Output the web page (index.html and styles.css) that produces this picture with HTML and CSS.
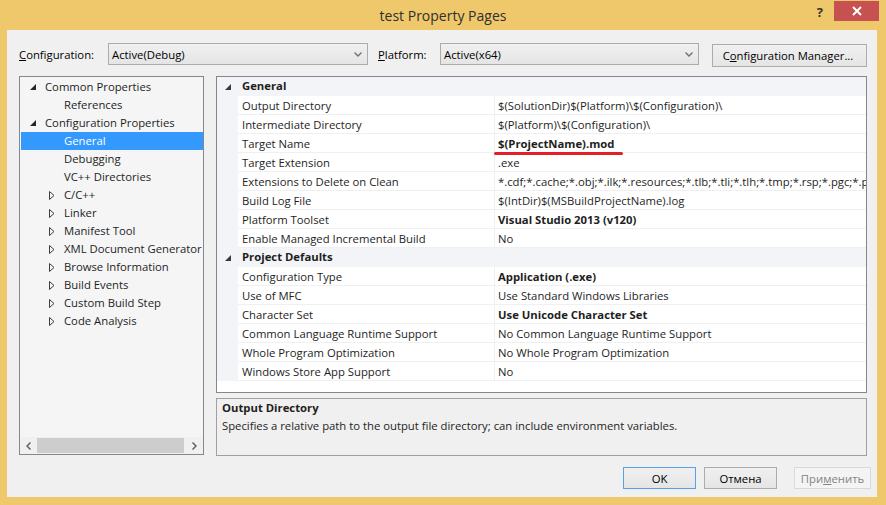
FILE: index.html
```html
<!DOCTYPE html>
<html>
<head>
<meta charset="utf-8">
<title>test Property Pages</title>
<link rel="stylesheet" href="styles.css">
</head>
<body>
<div class="window">
  <div class="titlebar">
    <div></div>
    <div class="title">test Property Pages</div>
    <div class="controls">
      <span class="help">?</span>
      <span class="close"><svg width="10" height="10" viewBox="0 0 10 10"><path d="M1 1 L9 9 M9 1 L1 9" stroke="#fff" stroke-width="2" fill="none"/></svg></span>
    </div>
  </div>
  <div class="client">
    <div class="toolbar">
      <span class="lbl lbl-config"><u>C</u>onfiguration:</span>
      <div class="combo combo-config"><span>Active(Debug)</span><svg class="chev" width="8" height="5" viewBox="0 0 8 5"><path d="M0.5 0.5 L4 4 L7.5 0.5" stroke="#707070" stroke-width="1.4" fill="none"/></svg></div>
      <span class="lbl lbl-platform"><u>P</u>latform:</span>
      <div class="combo combo-platform"><span>Active(x64)</span><svg class="chev" width="8" height="5" viewBox="0 0 8 5"><path d="M0.5 0.5 L4 4 L7.5 0.5" stroke="#707070" stroke-width="1.4" fill="none"/></svg></div>
      <button class="btn btn-manager">C<u>o</u>nfiguration Manager...</button>
    </div>
    <div class="main">
      <div class="tree">
        <div class="tree-rows">
          <div class="node l1"><span class="tw"><svg width="6" height="6" viewBox="0 0 6 6"><polygon points="6,0 6,6 0,6" fill="#262626"/></svg></span>Common Properties</div>
          <div class="node l2"><span class="tw"></span>References</div>
          <div class="node l1"><span class="tw"><svg width="6" height="6" viewBox="0 0 6 6"><polygon points="6,0 6,6 0,6" fill="#262626"/></svg></span>Configuration Properties</div>
          <div class="node l2 sel"><span class="tw"></span>General</div>
          <div class="node l2"><span class="tw"></span>Debugging</div>
          <div class="node l2"><span class="tw"></span>VC++ Directories</div>
          <div class="node l2"><span class="tw"><svg width="6" height="9" viewBox="0 0 6 9"><polygon points="0.5,0.5 5,4.5 0.5,8.5" fill="none" stroke="#3c3c3c" stroke-width="1"/></svg></span>C/C++</div>
          <div class="node l2"><span class="tw"><svg width="6" height="9" viewBox="0 0 6 9"><polygon points="0.5,0.5 5,4.5 0.5,8.5" fill="none" stroke="#3c3c3c" stroke-width="1"/></svg></span>Linker</div>
          <div class="node l2"><span class="tw"><svg width="6" height="9" viewBox="0 0 6 9"><polygon points="0.5,0.5 5,4.5 0.5,8.5" fill="none" stroke="#3c3c3c" stroke-width="1"/></svg></span>Manifest Tool</div>
          <div class="node l2"><span class="tw"><svg width="6" height="9" viewBox="0 0 6 9"><polygon points="0.5,0.5 5,4.5 0.5,8.5" fill="none" stroke="#3c3c3c" stroke-width="1"/></svg></span>XML Document Generator</div>
          <div class="node l2"><span class="tw"><svg width="6" height="9" viewBox="0 0 6 9"><polygon points="0.5,0.5 5,4.5 0.5,8.5" fill="none" stroke="#3c3c3c" stroke-width="1"/></svg></span>Browse Information</div>
          <div class="node l2"><span class="tw"><svg width="6" height="9" viewBox="0 0 6 9"><polygon points="0.5,0.5 5,4.5 0.5,8.5" fill="none" stroke="#3c3c3c" stroke-width="1"/></svg></span>Build Events</div>
          <div class="node l2"><span class="tw"><svg width="6" height="9" viewBox="0 0 6 9"><polygon points="0.5,0.5 5,4.5 0.5,8.5" fill="none" stroke="#3c3c3c" stroke-width="1"/></svg></span>Custom Build Step</div>
          <div class="node l2"><span class="tw"><svg width="6" height="9" viewBox="0 0 6 9"><polygon points="0.5,0.5 5,4.5 0.5,8.5" fill="none" stroke="#3c3c3c" stroke-width="1"/></svg></span>Code Analysis</div>
        </div>
        <div class="hscroll">
          <span class="sarrow"><svg width="5" height="8" viewBox="0 0 5 8"><path d="M4.5 0.5 L1 4 L4.5 7.5" stroke="#606060" stroke-width="1.5" fill="none"/></svg></span>
          <span class="strack"><span class="sthumb"></span></span>
          <span class="sarrow"><svg width="5" height="8" viewBox="0 0 5 8"><path d="M0.5 0.5 L4 4 L0.5 7.5" stroke="#606060" stroke-width="1.5" fill="none"/></svg></span>
        </div>
      </div>
      <div class="right">
        <div class="grid">
          <div class="prow head"><span class="gut"><svg width="6" height="6" viewBox="0 0 6 6"><polygon points="6,0 6,6 0,6" fill="#3a3a3a"/></svg></span><span class="hname">General</span></div>
          <div class="prow"><span class="gut"></span><span class="pname">Output Directory</span><span class="pval">$(SolutionDir)$(Platform)\$(Configuration)\</span></div>
          <div class="prow"><span class="gut"></span><span class="pname">Intermediate Directory</span><span class="pval">$(Platform)\$(Configuration)\</span></div>
          <div class="prow"><span class="gut"></span><span class="pname">Target Name</span><span class="pval b marked">$(ProjectName).mod<span class="redline"></span></span></div>
          <div class="prow"><span class="gut"></span><span class="pname">Target Extension</span><span class="pval">.exe</span></div>
          <div class="prow"><span class="gut"></span><span class="pname">Extensions to Delete on Clean</span><span class="pval">*.cdf;*.cache;*.obj;*.ilk;*.resources;*.tlb;*.tli;*.tlh;*.tmp;*.rsp;*.pgc;*.pgd;*.meta;*.tlog;*.manifest;*.res;*.pch;*.exp;*.idb;*.rep;*.xdc;*.pdb</span></div>
          <div class="prow"><span class="gut"></span><span class="pname">Build Log File</span><span class="pval">$(IntDir)$(MSBuildProjectName).log</span></div>
          <div class="prow"><span class="gut"></span><span class="pname">Platform Toolset</span><span class="pval b">Visual Studio 2013 (v120)</span></div>
          <div class="prow"><span class="gut"></span><span class="pname">Enable Managed Incremental Build</span><span class="pval">No</span></div>
          <div class="prow head"><span class="gut"><svg width="6" height="6" viewBox="0 0 6 6"><polygon points="6,0 6,6 0,6" fill="#3a3a3a"/></svg></span><span class="hname">Project Defaults</span></div>
          <div class="prow"><span class="gut"></span><span class="pname">Configuration Type</span><span class="pval b">Application (.exe)</span></div>
          <div class="prow"><span class="gut"></span><span class="pname">Use of MFC</span><span class="pval">Use Standard Windows Libraries</span></div>
          <div class="prow"><span class="gut"></span><span class="pname">Character Set</span><span class="pval b">Use Unicode Character Set</span></div>
          <div class="prow"><span class="gut"></span><span class="pname">Common Language Runtime Support</span><span class="pval">No Common Language Runtime Support</span></div>
          <div class="prow"><span class="gut"></span><span class="pname">Whole Program Optimization</span><span class="pval">No Whole Program Optimization</span></div>
          <div class="prow"><span class="gut"></span><span class="pname">Windows Store App Support</span><span class="pval">No</span></div>
        </div>
        <div class="desc">
          <div class="desc-title">Output Directory</div>
          <div class="desc-text">Specifies a relative path to the output file directory; can include environment variables.</div>
        </div>
      </div>
    </div>
    <div class="buttons">
      <button class="btn btn-dlg btn-default">OK</button>
      <button class="btn btn-dlg">Отмена</button>
      <button class="btn btn-dlg btn-disabled">При<u>м</u>енить</button>
    </div>
  </div>
</div>
</body>
</html>
```

FILE: styles.css
```css
* { box-sizing: border-box; }
html, body { margin: 0; padding: 0; }
body {
  width: 886px;
  height: 505px;
  overflow: hidden;
  font-family: "Segoe UI", "Open Sans", "Noto Sans", sans-serif;
  font-size: 11.3px;
  color: #000;
}
.window {
  width: 886px;
  height: 505px;
  background: #f0c86c;
  display: flex;
  flex-direction: column;
  padding: 0 9px 8px 7px;
}
.titlebar {
  height: 30px;
  flex: none;
  margin: 0 -9px 0 -7px;
  display: grid;
  grid-template-columns: 1fr auto 1fr;
}
.title {
  font-size: 14px;
  color: #2f2f2f;
  line-height: 30px;
  padding-top: 1px;
}
.controls {
  display: flex;
  justify-content: flex-end;
  align-items: flex-start;
  padding-right: 7px;
}
.help {
  font-weight: bold;
  font-size: 13px;
  color: #333;
  margin: 3px 11px 0 0;
}
.close {
  width: 45px;
  height: 20px;
  margin-top: 1px;
  background: #c75050;
  display: flex;
  align-items: center;
  justify-content: center;
}
.client {
  flex: 1;
  min-width: 0;
  background: #f0f0f0;
  display: flex;
  flex-direction: column;
  padding: 13px 0 8px;
}
.toolbar {
  display: flex;
  align-items: center;
  height: 22px;
  padding-left: 12px;
}
.lbl { display: block; flex: none; }
.lbl-config { width: 89px; }
.lbl-platform { width: 62px; margin-left: 10px; }
.combo {
  flex: none;
  height: 22px;
  border: 1px solid #acacac;
  background: linear-gradient(#f0f0f0, #e5e5e5);
  display: flex;
  align-items: center;
  justify-content: space-between;
  padding: 0 5px 0 3px;
}
.combo-config { width: 260px; }
.combo-platform { width: 259px; }
.chev { margin-top: 1px; }
.btn {
  font: inherit;
  color: #000;
  border: 1px solid #acacac;
  background: linear-gradient(#f0f0f0, #e5e5e5);
  height: 22px;
  padding: 0;
  margin: 0;
  flex: none;
}
.btn-manager {
  width: 155px;
  height: 23px;
  margin-left: 13px;
  margin-top: 2px;
  padding-right: 3px;
}
.main {
  flex: 1;
  min-height: 0;
  display: flex;
  gap: 12px;
  margin-top: 11px;
  padding: 0 10px 0 12px;
}
.tree {
  flex: none;
  width: 185px;
  height: 379px;
  border: 1px solid #828790;
  background: #f5f5f5;
  display: flex;
  flex-direction: column;
}
.tree-rows {
  flex: 1;
  padding-top: 1px;
}
.node {
  height: 18px;
  line-height: 18px;
  display: flex;
  align-items: center;
  white-space: nowrap;
  color: #1e1e1e;
}
.node.l1 { padding-left: 10px; }
.node.l2 { padding-left: 29px; }
.tw {
  width: 15px;
  flex: none;
  display: flex;
  align-items: center;
}
.node.sel {
  background: #3399ff;
  color: #fff;
  margin-left: 1px;
  padding-left: 28px;
}
.hscroll {
  height: 17px;
  display: flex;
  align-items: center;
  background: #f0f0f0;
}
.sarrow {
  width: 17px;
  height: 17px;
  display: flex;
  align-items: center;
  justify-content: center;
}
.strack {
  flex: 1;
  height: 17px;
  padding: 1px 0;
}
.sthumb {
  display: block;
  width: 147px;
  height: 15px;
  background: #cdcdcd;
}
.right {
  flex: 1;
  min-width: 0;
  display: flex;
  flex-direction: column;
  gap: 5px;
}
.grid {
  flex: 1;
  min-width: 0;
  border: 1px solid #828790;
  background: #fff;
  overflow: hidden;
}
.prow {
  display: flex;
  height: 19px;
  line-height: 18px;
  min-width: 0;
}
.gut {
  width: 21px;
  flex: none;
  background: #f3f4f8;
  display: flex;
  align-items: center;
  justify-content: center;
  padding-left: 1px;
}
.head { background: #f3f4f8; }
.hname {
  flex: 1;
  font-weight: bold;
  padding-left: 4px;
  color: #1e1e1e;
}
.pname {
  width: 257px;
  flex: none;
  padding: 1px 0 0 4px;
  border-bottom: 1px solid #f0f0f0;
  border-right: 1px solid #f0f0f0;
  white-space: nowrap;
  color: #1e1e1e;
}
.pval {
  flex: 1;
  min-width: 0;
  padding: 1px 0 0 3px;
  border-bottom: 1px solid #f0f0f0;
  white-space: nowrap;
  overflow: hidden;
  color: #1e1e1e;
}
.pval.b { font-weight: bold; }
.pval.marked {
  position: relative;
  overflow: visible;
}
.redline {
  position: absolute;
  left: -1px;
  bottom: -3px;
  width: 129px;
  height: 3px;
  border-radius: 2px;
  background: #e3202a;
}
.desc {
  height: 58px;
  flex: none;
  border: 1px solid #a0a0a0;
  background: #f0f0f0;
  padding: 0 5px;
  line-height: 18px;
  color: #1e1e1e;
}
.desc-title { font-weight: bold; }
.buttons {
  display: flex;
  justify-content: flex-end;
  gap: 8px;
  margin-top: 11px;
  padding-right: 6px;
}
.btn-dlg { width: 73px; }
.btn-default { border-color: #5b9fe4; }
.btn-disabled {
  width: 77px;
  margin-left: 9px;
  color: #838383;
  background: #f4f4f4;
  border-color: #d9d9d9;
}
```
